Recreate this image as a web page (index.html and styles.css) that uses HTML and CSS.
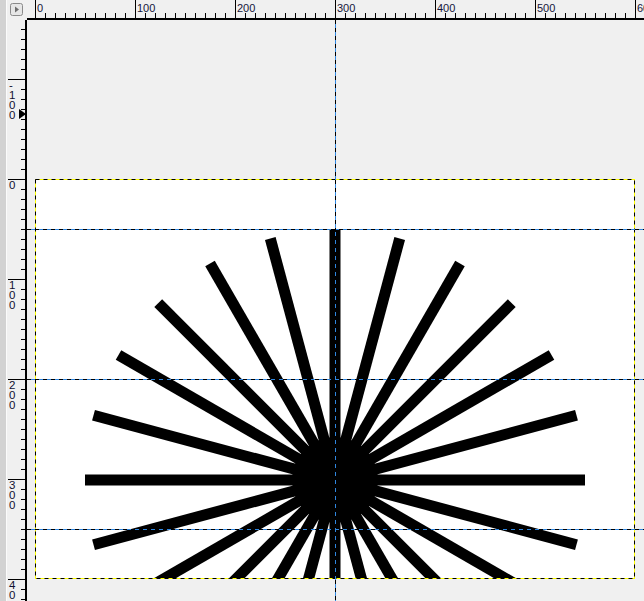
FILE: index.html
```html
<!DOCTYPE html>
<html lang="en">

<head>
    <meta charset="UTF-8">
    <meta name="viewport" content="width=device-width, initial-scale=1.0">
    <title>Image Window</title>
    <link rel="stylesheet" href="styles.css">
</head>

<body>
    <div class="window">
        <div class="edge-strip"></div>

        <div class="workspace">
            <div class="corner">
                <button class="nav-button" title="Navigate">
                    <svg width="13" height="13" viewBox="0 0 13 13">
                        <rect x="0.5" y="0.5" width="12" height="12" rx="2" class="nav-frame" />
                        <polygon points="5,3.5 9,6.5 5,9.5" class="nav-arrow" />
                    </svg>
                </button>
            </div>

            <!-- horizontal ruler, 1 unit = 1 px, origin at x=35 -->
            <svg class="ruler ruler-top" width="617" height="20" viewBox="27 0 617 20">
                <defs>
                    <pattern id="tickX" patternUnits="userSpaceOnUse" x="35" y="0" width="10" height="20">
                        <rect x="0" y="13" width="1" height="5" />
                    </pattern>
                </defs>
                <rect x="27" y="0" width="617" height="20" fill="url(#tickX)" />
                <rect x="27" y="18" width="617" height="2" />
                <rect x="35" y="0" width="1" height="19" />
                <rect x="135" y="0" width="1" height="19" />
                <rect x="235" y="0" width="1" height="19" />
                <rect x="335" y="0" width="1" height="19" />
                <rect x="435" y="0" width="1" height="19" />
                <rect x="535" y="0" width="1" height="19" />
                <rect x="635" y="0" width="1" height="19" />
                <text class="tick-label" x="37" y="12">0</text>
                <text class="tick-label" x="137" y="12">100</text>
                <text class="tick-label" x="237" y="12">200</text>
                <text class="tick-label" x="337" y="12">300</text>
                <text class="tick-label" x="437" y="12">400</text>
                <text class="tick-label" x="537" y="12">500</text>
                <text class="tick-label" x="637" y="12">600</text>
            </svg>

            <!-- vertical ruler, origin at y=179, digits stacked -->
            <svg class="ruler ruler-left" width="20" height="581" viewBox="7 20 20 581">
                <defs>
                    <pattern id="tickY" patternUnits="userSpaceOnUse" x="0" y="179" width="27" height="10">
                        <rect x="21" y="0" width="5" height="1" />
                    </pattern>
                </defs>
                <rect x="7" y="20" width="20" height="581" fill="url(#tickY)" />
                <rect x="25" y="20" width="2" height="581" />
                <rect x="8" y="79" width="18" height="1" />
                <rect x="8" y="179" width="18" height="1" />
                <rect x="8" y="279" width="18" height="1" />
                <rect x="8" y="379" width="18" height="1" />
                <rect x="8" y="479" width="18" height="1" />
                <rect x="8" y="579" width="18" height="1" />

                <text class="tick-label stacked" x="9" y="89">-</text>
                <text class="tick-label stacked" x="9" y="99">1</text>
                <text class="tick-label stacked" x="9" y="109">0</text>
                <text class="tick-label stacked" x="9" y="119">0</text>

                <text class="tick-label stacked" x="9" y="189">0</text>

                <text class="tick-label stacked" x="9" y="289">1</text>
                <text class="tick-label stacked" x="9" y="299">0</text>
                <text class="tick-label stacked" x="9" y="309">0</text>

                <text class="tick-label stacked" x="9" y="389">2</text>
                <text class="tick-label stacked" x="9" y="399">0</text>
                <text class="tick-label stacked" x="9" y="409">0</text>

                <text class="tick-label stacked" x="9" y="489">3</text>
                <text class="tick-label stacked" x="9" y="499">0</text>
                <text class="tick-label stacked" x="9" y="509">0</text>

                <text class="tick-label stacked" x="9" y="589">4</text>
                <text class="tick-label stacked" x="9" y="599">0</text>

                <!-- pointer position marker -->
                <polygon points="19,109 26,114 19,119" />
            </svg>

            <!-- drawing area, screen coordinates via viewBox -->
            <svg class="viewport" width="617" height="581" viewBox="27 20 617 581">
                <rect x="35" y="179" width="600" height="400" class="canvas-bg" />

                <svg x="35" y="179" width="600" height="400">
                    <g class="star" transform="translate(300 301)">
                        <line x1="-250" y1="0" x2="250" y2="0" transform="rotate(0)" />
                        <line x1="-250" y1="0" x2="250" y2="0" transform="rotate(15)" />
                        <line x1="-250" y1="0" x2="250" y2="0" transform="rotate(30)" />
                        <line x1="-250" y1="0" x2="250" y2="0" transform="rotate(45)" />
                        <line x1="-250" y1="0" x2="250" y2="0" transform="rotate(60)" />
                        <line x1="-250" y1="0" x2="250" y2="0" transform="rotate(75)" />
                        <line x1="-250" y1="0" x2="250" y2="0" transform="rotate(90)" />
                        <line x1="-250" y1="0" x2="250" y2="0" transform="rotate(105)" />
                        <line x1="-250" y1="0" x2="250" y2="0" transform="rotate(120)" />
                        <line x1="-250" y1="0" x2="250" y2="0" transform="rotate(135)" />
                        <line x1="-250" y1="0" x2="250" y2="0" transform="rotate(150)" />
                        <line x1="-250" y1="0" x2="250" y2="0" transform="rotate(165)" />
                        <circle cx="0" cy="0" r="43" />
                    </g>
                </svg>

                <!-- layer boundary -->
                <rect x="35.5" y="179.5" width="599" height="399" class="bound-under" />
                <rect x="35.5" y="179.5" width="599" height="399" class="bound-dash" />

                <!-- guides -->
                <g class="guide-under">
                    <line x1="335.5" y1="20" x2="335.5" y2="601" />
                    <line x1="27" y1="229.5" x2="644" y2="229.5" />
                    <line x1="27" y1="379.5" x2="644" y2="379.5" />
                    <line x1="27" y1="529.5" x2="644" y2="529.5" />
                </g>
                <g class="guide-dash">
                    <line x1="335.5" y1="20" x2="335.5" y2="601" />
                    <line x1="27" y1="229.5" x2="644" y2="229.5" />
                    <line x1="27" y1="379.5" x2="644" y2="379.5" />
                    <line x1="27" y1="529.5" x2="644" y2="529.5" />
                </g>
            </svg>
        </div>
    </div>
</body>

</html>
```

FILE: styles.css
```css
body {
    margin: 0;
    padding: 0;
    background-color: #f0f0f0;
    font-family: 'Liberation Sans', Arial, sans-serif;
    overflow: hidden;
}

.window {
    display: flex;
    width: 644px;
    height: 601px;
}

.edge-strip {
    width: 6px;
    background-color: #d2d2d2;
    border-right: 1px solid #fbfbfb;
}

.workspace {
    display: grid;
    grid-template-columns: 20px 617px;
    grid-template-rows: 20px 581px;
    background-color: #f0f0f0;
}

.corner {
    padding: 3px 0 0 3px;
}

.nav-button {
    display: block;
    width: 13px;
    height: 13px;
    padding: 0;
    border: none;
    background: none;
}

.nav-button svg {
    display: block;
}

.nav-frame {
    fill: #e6e6e6;
    stroke: #8a8a8a;
}

.nav-arrow {
    fill: #6e6e6e;
}

.ruler {
    display: block;
    background-color: #f0f0f0;
    fill: #000;
}

.tick-label {
    font-family: 'Liberation Sans', Arial, sans-serif;
    font-size: 11px;
    fill: #14143a;
}

.tick-label.stacked {
    font-size: 11.5px;
    fill: #101030;
}

.viewport {
    display: block;
}

.canvas-bg {
    fill: #ffffff;
}

.star line {
    stroke: #000;
    stroke-width: 11;
    stroke-linecap: butt;
}

.star circle {
    fill: #000;
}

.bound-under {
    fill: none;
    stroke: #ffff00;
    stroke-width: 1;
}

.bound-dash {
    fill: none;
    stroke: #000;
    stroke-width: 1;
    stroke-dasharray: 4 4;
}

.guide-under line {
    stroke: #2f86e0;
    stroke-width: 1;
}

.guide-dash line {
    stroke: #000;
    stroke-width: 1;
    stroke-dasharray: 4 4;
}
```
